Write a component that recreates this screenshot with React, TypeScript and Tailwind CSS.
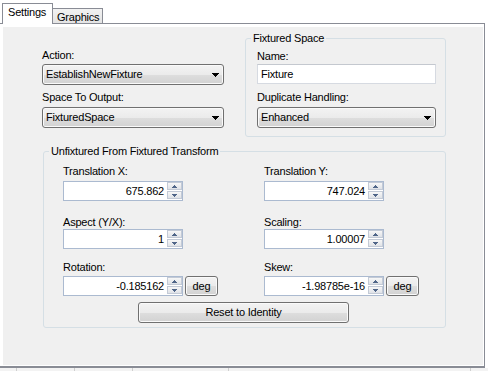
import React from 'react';

function ComboArrow() {
  return (
    <svg width="7" height="4" viewBox="0 0 7 4" shapeRendering="crispEdges" className="shrink-0">
      <rect x="0" y="0" width="7" height="1" fill="#000" />
      <rect x="1" y="1" width="5" height="1" fill="#000" />
      <rect x="2" y="2" width="3" height="1" fill="#000" />
      <rect x="3" y="3" width="1" height="1" fill="#000" />
    </svg>
  );
}

function Combo({ value, className = '' }: { value: string; className?: string }) {
  return (
    <div
      className={`flex h-[21px] items-center rounded-[3px] border border-[#707070] bg-[linear-gradient(#f3f3f3,#ebebeb_50%,#dedede_50%,#d2d2d2)] pl-[3px] pr-[4px] shadow-[inset_0_0_0_1px_#fafafa] ${className}`}
    >
      <span className="flex-1 truncate">{value}</span>
      <ComboArrow />
    </div>
  );
}

function SpinBtn({ up }: { up?: boolean }) {
  return (
    <div className="flex h-[8px] items-center justify-center border border-[#c3cad6] bg-[linear-gradient(#f7f7f7,#dfe2e7)]">
      <svg width="5" height="3" viewBox="0 0 5 3" shapeRendering="crispEdges">
        {up ? (
          <>
            <rect x="2" y="0" width="1" height="1" fill="#4f6588" />
            <rect x="1" y="1" width="3" height="1" fill="#4f6588" />
            <rect x="0" y="2" width="5" height="1" fill="#4f6588" />
          </>
        ) : (
          <>
            <rect x="0" y="0" width="5" height="1" fill="#4f6588" />
            <rect x="1" y="1" width="3" height="1" fill="#4f6588" />
            <rect x="2" y="2" width="1" height="1" fill="#4f6588" />
          </>
        )}
      </svg>
    </div>
  );
}

function Spin({ value }: { value: string }) {
  return (
    <div className="flex h-[20px] w-[120px] border border-[#abbad0] bg-white">
      <div className="flex-1 pr-[3px] text-right leading-[18px]">{value}</div>
      <div className="flex w-[15px] flex-col gap-[1px]">
        <SpinBtn up />
        <SpinBtn />
      </div>
    </div>
  );
}

function WinButton({ label, className = '' }: { label: string; className?: string }) {
  return (
    <div
      className={`flex items-center justify-center rounded-[3px] border border-[#707070] bg-[linear-gradient(#f3f3f3,#ebebeb_50%,#dedede_50%,#d2d2d2)] shadow-[inset_0_0_0_1px_#fafafa] ${className}`}
    >
      {label}
    </div>
  );
}

function GroupBox({ title, className = '', children }: { title: string; className?: string; children: React.ReactNode }) {
  return (
    <div className={`relative rounded-[3px] border border-[#d5dfe5] ${className}`}>
      <span className="absolute -top-[7px] left-[5px] bg-[#f0f0f0] px-[2px] leading-[13px]">{title}</span>
      {children}
    </div>
  );
}

function Field({ label, value, unit, labelGap, className = '' }: { label: string; value: string; unit?: boolean; labelGap: string; className?: string }) {
  return (
    <div className={`flex flex-col ${className}`}>
      <div className="leading-[13px]">{label}</div>
      <div className={`flex items-center ${labelGap}`}>
        <Spin value={value} />
        {unit && <WinButton label="deg" className="ml-[2px] h-[20px] w-[33px]" />}
      </div>
    </div>
  );
}

export default function App() {
  return (
    <div className="h-[371px] w-[488px] overflow-hidden bg-white font-['Liberation_Sans',Arial,sans-serif] text-[11px] leading-[13px] tracking-[-0.2px] text-black">
      {/* tab headers */}
      <div className="flex h-[23px] items-end pl-[2px]">
        <div className="relative z-10 -mb-px h-[21px] w-[51px] border-x border-t border-[#898c95] bg-white pl-[5px] pt-[2px]">
          Settings
        </div>
        <div className="h-[15px] w-[50px] border-r border-t border-[#898c95] bg-[linear-gradient(#f2f2f2,#e4e4e4)] pl-[4px] pt-[2px]">
          Graphics
        </div>
      </div>

      {/* tab page */}
      <div className="-ml-px h-[345px] w-[486px] border border-b-2 border-[#898c95] bg-white pb-px pl-[3px] pr-px pt-[3px]">
        <div className="h-full bg-[#f0f0f0] pl-[39px] pt-[11px]">
          <div className="flex items-start">
            <div className="flex w-[182px] flex-col">
              <div className="mt-[11px]">Action:</div>
              <Combo value="EstablishNewFixture" className="mt-[2px]" />
              <div className="mt-[6px]">Space To Output:</div>
              <Combo value="FixturedSpace" className="mt-[3px]" />
            </div>

            <GroupBox title="Fixtured Space" className="ml-[21px] w-[201px] px-[11px] pb-[8px] pt-[11px]">
              <div>Name:</div>
              <div className="mt-[1px] h-[20px] w-[179px] border border-[#d6dae1] border-t-[#c4c8cf] bg-white pl-[3px] leading-[18px]">
                Fixture
              </div>
              <div className="mt-[7px]">Duplicate Handling:</div>
              <Combo value="Enhanced" className="mt-[3px] w-[179px]" />
            </GroupBox>
          </div>

          <GroupBox title="Unfixtured From Fixtured Transform" className="ml-px mt-[14px] w-[403px] pb-[4px] pl-[19px] pt-[13px]">
            <div className="grid grid-cols-[201px_201px]">
              <Field label="Translation X:" value="675.862" labelGap="mt-[3px]" />
              <Field label="Translation Y:" value="747.024" labelGap="mt-[3px]" />
              <Field label="Aspect (Y/X):" value="1" labelGap="mt-0" className="mt-[15px]" />
              <Field label="Scaling:" value="1.00007" labelGap="mt-0" className="mt-[15px]" />
              <Field label="Rotation:" value="-0.185162" unit labelGap="mt-[2px]" className="mt-[12px]" />
              <Field label="Skew:" value="-1.98785e-16" unit labelGap="mt-[2px]" className="mt-[12px]" />
            </div>
            <WinButton label="Reset to Identity" className="ml-[75px] mt-[6px] h-[21px] w-[211px]" />
          </GroupBox>
        </div>
      </div>

      {/* list header peeking below */}
      <div className="flex h-[3px] bg-[#f3f3f3]">
        <div className="w-[17px] border-r border-[#cfcfcf]" />
        <div className="w-[58px] border-r border-[#cfcfcf]" />
        <div className="w-[58px] border-r border-[#cfcfcf]" />
        <div className="w-[96px] border-r border-[#cfcfcf]" />
        <div className="w-[242px] border-r border-[#cfcfcf]" />
      </div>
    </div>
  );
}
